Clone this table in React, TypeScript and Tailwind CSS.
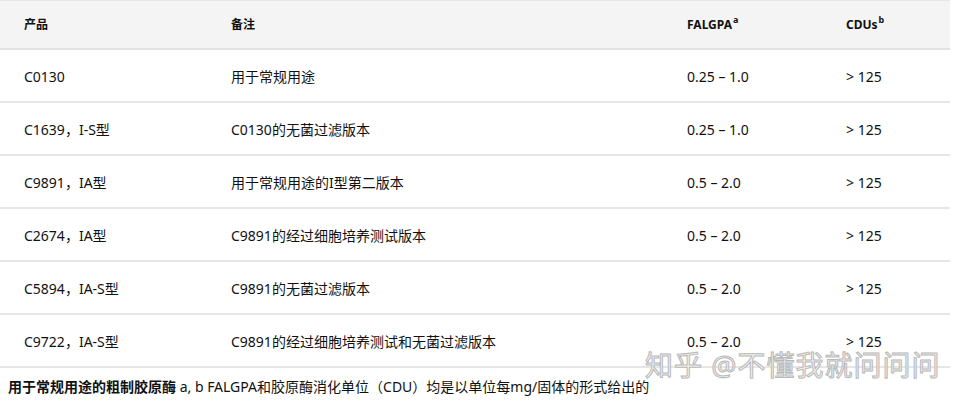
import React from 'react'

const rows = [
  ['C0130', '用于常规用途', '0.25 – 1.0', '> 125'],
  ['C1639，I-S型', 'C0130的无菌过滤版本', '0.25 – 1.0', '> 125'],
  ['C9891，IA型', '用于常规用途的I型第二版本', '0.5 – 2.0', '> 125'],
  ['C2674，IA型', 'C9891的经过细胞培养测试版本', '0.5 – 2.0', '> 125'],
  ['C5894，IA-S型', 'C9891的无菌过滤版本', '0.5 – 2.0', '> 125'],
  ['C9722，IA-S型', 'C9891的经过细胞培养测试和无菌过滤版本', '0.5 – 2.0', '> 125'],
]

const App = () => {
  return (
    <div
      className="relative w-[958px] h-[403px] bg-white text-[#111] overflow-hidden"
      style={{ fontFamily: '"Noto Sans", "Noto Sans CJK SC", sans-serif' }}
    >
      <div className="w-[950px] border-t border-[#e6e6e6]">
        <div className="grid grid-cols-[231px_456px_159px_104px] h-[49px] items-center bg-[#f4f4f4] border-b-2 border-[#e2e2e2] text-[12px] font-bold">
          <div className="pl-6">产品</div>
          <div>备注</div>
          <div>
            FALGPA<sup className="text-[9px] -top-[6px] ml-px">a</sup>
          </div>
          <div>
            CDUs<sup className="text-[9px] -top-[6px] ml-px">b</sup>
          </div>
        </div>
        {rows.map((r, i) => (
          <div
            key={i}
            className="grid grid-cols-[231px_456px_159px_104px] h-[53px] items-center pt-[2px] border-b-2 border-[#e6e6e6] text-[14px]"
          >
            <div className="pl-6">{r[0]}</div>
            <div>{r[1]}</div>
            <div>{r[2]}</div>
            <div>{r[3]}</div>
          </div>
        ))}
      </div>
      <div className="pl-2 pt-[8px] text-[14px]">
        <span className="font-bold">用于常规用途的粗制胶原酶</span> a, b FALGPA和胶原酶消化单位（CDU）均是以单位每mg/固体的形式给出的
      </div>
      <div
        className="absolute left-[645px] top-[344px] text-[28px] tracking-[1px] text-[#f2f2f2] pointer-events-none"
        style={{ WebkitTextStroke: '1px #b8b8b8' }}
      >
        知乎 @不懂我就问问问
      </div>
    </div>
  )
}

export default App
